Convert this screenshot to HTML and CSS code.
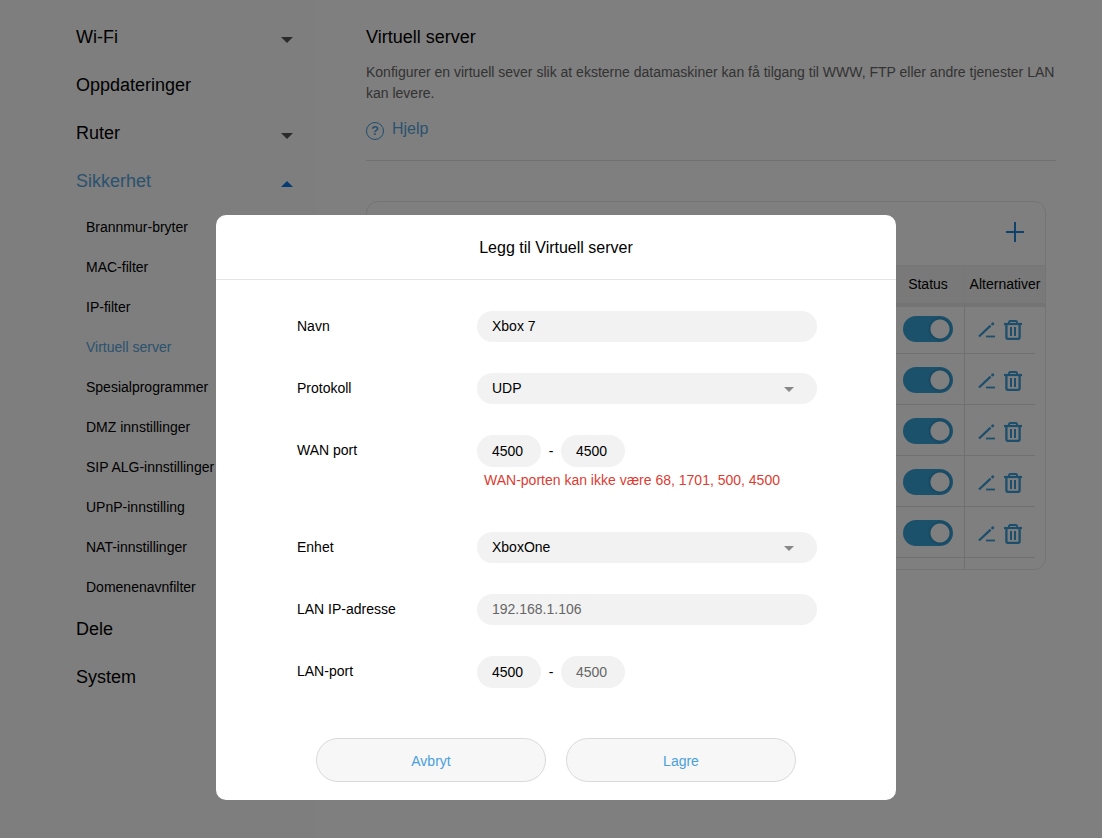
FILE: index.html
```
<!DOCTYPE html>
<html lang="no">
<head>
  <meta charset="UTF-8" />
  <meta name="viewport" content="width=device-width, initial-scale=1.0"/>
  <title>Virtuell server</title>
  <link rel="stylesheet" href="styles.css">
</head>
<body>
  <svg class="sprite" aria-hidden="true">
    <symbol id="icon-edit" viewBox="0 0 18 16">
      <path d="M1 14.5L12.6 3.6" stroke-width="2.3" />
      <path d="M14.6 1.9l.2-.2" stroke-width="2.8" stroke-linecap="round" />
      <path d="M8 14.5H17" stroke-width="1.8" />
    </symbol>
    <symbol id="icon-trash" viewBox="0 0 18 20">
      <path d="M0 4H18" stroke-width="2.2" />
      <path d="M5 4V2.2Q5 1 6.2 1H11.8Q13 1 13 2.2V4" stroke-width="1.9" />
      <path d="M2.4 4V17.3Q2.4 18.8 3.9 18.8H14.1Q15.6 18.8 15.6 17.3V4" stroke-width="2.3" />
      <path d="M7 7V16M11 7V16" stroke-width="2" />
    </symbol>
  </svg>

  <div class="page">
    <nav class="sidebar">
      <a href="#" class="menu-item">Wi-Fi <span class="caret"></span></a>
      <a href="#" class="menu-item">Oppdateringer</a>
      <a href="#" class="menu-item">Ruter <span class="caret"></span></a>
      <a href="#" class="menu-item active">Sikkerhet <span class="caret up"></span></a>
      <div class="submenu">
        <a href="#">Brannmur-bryter</a>
        <a href="#">MAC-filter</a>
        <a href="#">IP-filter</a>
        <a href="#" class="active">Virtuell server</a>
        <a href="#">Spesialprogrammer</a>
        <a href="#">DMZ innstillinger</a>
        <a href="#">SIP ALG-innstillinger</a>
        <a href="#">UPnP-innstilling</a>
        <a href="#">NAT-innstillinger</a>
        <a href="#">Domenenavnfilter</a>
      </div>
      <a href="#" class="menu-item">Dele</a>
      <a href="#" class="menu-item">System</a>
    </nav>

    <main class="content">
      <h1>Virtuell server</h1>
      <p class="description">Konfigurer en virtuell sever slik at eksterne datamaskiner kan få tilgang til WWW, FTP eller andre tjenester LAN kan levere.</p>
      <a href="#" class="help"><span class="help-icon">?</span>Hjelp</a>

      <section class="panel">
        <div class="panel-top">
          <button type="button" class="add" aria-label="Legg til">
            <svg width="18" height="20" viewBox="0 0 18 20"><path d="M0 10H18M9 0V20" /></svg>
          </button>
        </div>
        <table>
          <colgroup>
            <col />
            <col class="col-status" />
            <col class="col-options" />
            <col class="col-gutter" />
          </colgroup>
          <thead>
            <tr><th></th><th>Status</th><th class="options" colspan="2">Alternativer</th></tr>
          </thead>
          <tbody>
            <tr>
              <td></td>
              <td><input type="checkbox" class="toggle" aria-label="Status" checked /></td>
              <td class="options">
                <div class="actions">
                  <button type="button" aria-label="Rediger"><svg class="edit"><use href="#icon-edit" /></svg></button>
                  <button type="button" aria-label="Slett"><svg class="trash"><use href="#icon-trash" /></svg></button>
                </div>
              </td>
              <td class="gutter"></td>
            </tr>
            <tr>
              <td></td>
              <td><input type="checkbox" class="toggle" aria-label="Status" checked /></td>
              <td class="options">
                <div class="actions">
                  <button type="button" aria-label="Rediger"><svg class="edit"><use href="#icon-edit" /></svg></button>
                  <button type="button" aria-label="Slett"><svg class="trash"><use href="#icon-trash" /></svg></button>
                </div>
              </td>
              <td class="gutter"></td>
            </tr>
            <tr>
              <td></td>
              <td><input type="checkbox" class="toggle" aria-label="Status" checked /></td>
              <td class="options">
                <div class="actions">
                  <button type="button" aria-label="Rediger"><svg class="edit"><use href="#icon-edit" /></svg></button>
                  <button type="button" aria-label="Slett"><svg class="trash"><use href="#icon-trash" /></svg></button>
                </div>
              </td>
              <td class="gutter"></td>
            </tr>
            <tr>
              <td></td>
              <td><input type="checkbox" class="toggle" aria-label="Status" checked /></td>
              <td class="options">
                <div class="actions">
                  <button type="button" aria-label="Rediger"><svg class="edit"><use href="#icon-edit" /></svg></button>
                  <button type="button" aria-label="Slett"><svg class="trash"><use href="#icon-trash" /></svg></button>
                </div>
              </td>
              <td class="gutter"></td>
            </tr>
            <tr>
              <td></td>
              <td><input type="checkbox" class="toggle" aria-label="Status" checked /></td>
              <td class="options">
                <div class="actions">
                  <button type="button" aria-label="Rediger"><svg class="edit"><use href="#icon-edit" /></svg></button>
                  <button type="button" aria-label="Slett"><svg class="trash"><use href="#icon-trash" /></svg></button>
                </div>
              </td>
              <td class="gutter"></td>
            </tr>
            <tr class="last"><td></td><td></td><td class="options"></td><td></td></tr>
          </tbody>
        </table>
      </section>
    </main>
  </div>

  <div class="overlay">
    <form class="modal" role="dialog" aria-labelledby="modal-title">
      <h2 id="modal-title">Legg til Virtuell server</h2>
      <div class="modal-body">
        <div class="row">
          <label for="name">Navn</label>
          <div class="field"><input id="name" type="text" value="Xbox 7" /></div>
        </div>
        <div class="row">
          <label for="protocol">Protokoll</label>
          <div class="field">
            <select id="protocol"><option>UDP</option></select>
          </div>
        </div>
        <div class="row">
          <label for="wan-start">WAN port</label>
          <div class="field">
            <div class="ports">
              <input id="wan-start" type="text" value="4500" />
              <span>-</span>
              <input type="text" value="4500" aria-label="WAN port" />
            </div>
            <p class="error">WAN-porten kan ikke være 68, 1701, 500, 4500</p>
          </div>
        </div>
        <div class="row">
          <label for="device">Enhet</label>
          <div class="field">
            <select id="device"><option>XboxOne</option></select>
          </div>
        </div>
        <div class="row">
          <label for="lan-ip">LAN IP-adresse</label>
          <div class="field"><input id="lan-ip" type="text" value="192.168.1.106" disabled /></div>
        </div>
        <div class="row">
          <label for="lan-start">LAN-port</label>
          <div class="field">
            <div class="ports">
              <input id="lan-start" type="text" value="4500" />
              <span>-</span>
              <input type="text" value="4500" aria-label="LAN-port" disabled />
            </div>
          </div>
        </div>
      </div>
      <div class="modal-footer">
        <button type="button">Avbryt</button>
        <button type="submit">Lagre</button>
      </div>
    </form>
  </div>
</body>
</html>
```
FILE: styles.css
```
* {
  margin: 0;
  padding: 0;
  box-sizing: border-box;
  font-family: "Liberation Sans", Arial, sans-serif;
}

body {
  background-color: #fff;
  color: #000;
  font-size: 14px;
  min-height: 100vh;
}

a {
  color: #000;
  text-decoration: none;
}

button {
  border: none;
  background: none;
  cursor: pointer;
}

.sprite {
  display: none;
}

.page {
  display: flex;
  min-height: 100vh;
}

/* Left menu */
.sidebar {
  flex: 0 0 316px;
  padding: 13px 23px 0 76px;
  background-color: #fcfcfc;
}

.menu-item {
  display: flex;
  justify-content: space-between;
  align-items: center;
  height: 48px;
  font-size: 18px;
}

.caret {
  margin-top: 5px;
  border-left: 6px solid transparent;
  border-right: 6px solid transparent;
  border-top: 6px solid #555;
}

.caret.up {
  border-top: none;
  border-bottom: 6px solid #0a78e8;
}

.submenu a {
  display: block;
  padding: 4px 0 0 10px;
  line-height: 36px;
  white-space: nowrap;
}

.sidebar .active {
  color: #56a4dc;
}

/* Main area */
.content {
  flex: 1;
  padding: 24px 46px 0 50px;
}

h1 {
  font-size: 18px;
  font-weight: normal;
  line-height: 26px;
}

.description {
  margin-top: 12px;
  color: #666;
  line-height: 21px;
}

.help {
  display: flex;
  height: 57px;
  padding-top: 14px;
  border-bottom: 1px solid #e0e0e0;
  color: #56a4dc;
  font-size: 16px;
  line-height: 22px;
}

.help-icon {
  width: 18px;
  height: 18px;
  margin: 4px 8px 0 0;
  border: 1px solid #3a9cdc;
  border-radius: 50%;
  font-size: 13px;
  font-weight: bold;
  line-height: 16px;
  text-align: center;
}

.panel {
  margin: 40px 10px 0 0;
  border: 1px solid #e8e8e8;
  border-radius: 12px;
}

.panel-top {
  display: flex;
  justify-content: flex-end;
  align-items: center;
  height: 63px;
  padding: 0 21px 4px;
}

.add {
  display: flex;
}

.add path {
  stroke: #2384dc;
  stroke-width: 2;
}

table {
  width: 100%;
  border-spacing: 0;
  table-layout: fixed;
}

.col-status {
  width: 72px;
}

.col-options {
  width: 71px;
}

.col-gutter {
  width: 10px;
}

th {
  height: 38px;
  padding-bottom: 2px;
  background-color: #f2f2f2;
  box-shadow: 0 4px #e8e8e8;
  border-top: 1px solid #ececec;
  font-weight: normal;
}

td {
  height: 51px;
  border-bottom: 1px solid #e0e0e0;
}

.options {
  border-left: 1px solid #e0e0e0;
}

th.options {
  border-left-color: #ececec;
}

.gutter {
  border-bottom: none;
}

.last td {
  height: 11px;
  border-bottom: none;
}

.toggle {
  display: block;
  appearance: none;
  width: 50px;
  height: 26px;
  margin: 2px auto 0;
  border-radius: 13px;
  background: radial-gradient(circle at 37px 13px, #fff 9px, #3092c6 10px, #38a2d8 13px);
}

.actions {
  display: flex;
  justify-content: center;
  align-items: center;
  gap: 8px;
  padding-top: 4px;
}

.actions svg {
  display: block;
  width: 18px;
  height: 20px;
  fill: none;
  stroke: #3a9cd8;
}

.actions .edit {
  height: 16px;
}

/* Dialog */
.overlay {
  position: fixed;
  inset: 0;
  display: flex;
  justify-content: center;
  align-items: flex-start;
  padding: 215px 0 0 10px;
  background-color: rgba(0, 0, 0, 0.5);
}

.modal {
  width: 680px;
  background-color: #fff;
  border-radius: 10px;
}

.modal h2 {
  padding-top: 2px;
  border-bottom: 1px solid #e4e4e4;
  font-size: 16px;
  font-weight: normal;
  line-height: 62px;
  text-align: center;
}

.modal-body {
  padding: 31px 79px 0 81px;
}

.row {
  display: flex;
  margin-bottom: 31px;
}

.row label {
  width: 180px;
  line-height: 31px;
}

.field {
  flex: 1;
}

.field input,
.field select {
  display: block;
  appearance: none;
  width: 100%;
  height: 31px;
  padding: 0 15px 1px;
  border: none;
  border-radius: 16px;
  background-color: #f2f2f2;
  color: #000;
  font-size: 14px;
}

.field select {
  background-image: url("data:image/svg+xml,%3Csvg xmlns='http://www.w3.org/2000/svg' width='10' height='5'%3E%3Cpath d='M0 0H10L5 5Z' fill='%23888'/%3E%3C/svg%3E");
  background-repeat: no-repeat;
  background-position: right 23px top 14px;
}

.field input:disabled {
  color: #666;
}

.ports {
  display: flex;
  align-items: center;
}

.field .ports input {
  width: 64px;
  height: 32px;
  padding: 0 15px;
}

.ports span {
  width: 20px;
  text-align: center;
}

.error {
  padding: 0 0 8px 7px;
  color: #dc3c32;
  line-height: 26px;
}

.modal-footer {
  display: flex;
  justify-content: center;
  gap: 20px;
  padding: 19px 0 18px;
}

.modal-footer button {
  width: 230px;
  height: 44px;
  padding-top: 2px;
  border: 1px solid #dadada;
  border-radius: 22px;
  background-color: #f7f7f7;
  color: #4ba0dc;
  font-size: 14px;
}
```
